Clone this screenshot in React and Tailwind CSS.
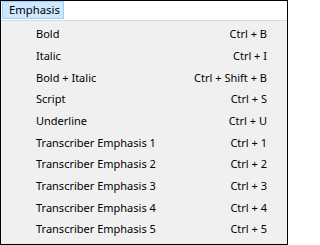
const items = [
  ['Bold', 'Ctrl + B'],
  ['Italic', 'Ctrl + I'],
  ['Bold + Italic', 'Ctrl + Shift + B'],
  ['Script', 'Ctrl + S'],
  ['Underline', 'Ctrl + U'],
  ['Transcriber Emphasis 1', 'Ctrl + 1'],
  ['Transcriber Emphasis 2', 'Ctrl + 2'],
  ['Transcriber Emphasis 3', 'Ctrl + 3'],
  ['Transcriber Emphasis 4', 'Ctrl + 4'],
  ['Transcriber Emphasis 5', 'Ctrl + 5'],
]

export default function App() {
  return (
    <div
      className="w-[288px] h-[245px] border border-black bg-[#f0f0f0] flex flex-col text-[11px] text-black"
      style={{ fontFamily: '"Noto Sans", "Open Sans", sans-serif' }}
    >
      <div className="h-[20px] bg-white flex items-stretch pl-px border-b border-[#d9d9d9]">
        <div className="w-[62px] h-[18px] bg-[#cce8ff] border border-[#99d1ff] flex items-center pl-[6px] leading-none text-[11.3px]">
          Emphasis
        </div>
      </div>
      <div className="flex flex-col pt-[2px]">
        {items.map(([label, keys]) => (
          <div key={label} className="h-[21.67px] flex items-center pl-[35px] pr-[20px] leading-none">
            <span className="flex-1">{label}</span>
            <span>{keys}</span>
          </div>
        ))}
      </div>
    </div>
  )
}
